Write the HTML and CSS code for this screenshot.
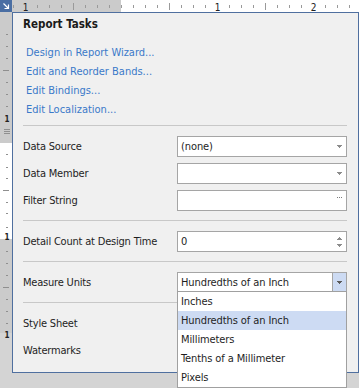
FILE: index.html
```html
<!DOCTYPE html>
<html lang="en">
<head>
  <meta charset="UTF-8">
  <meta name="viewport" content="width=device-width, initial-scale=1.0">
  <title>Report Tasks</title>
  <link rel="stylesheet" href="styles.css">
</head>
<body>
  <div class="designer">
    <div class="corner">
      <svg width="12" height="12" viewBox="0 0 12 12">
        <rect width="12" height="12" fill="#4a6ea3"/>
        <path d="M3.5 3.5L8 8M8.5 4.5v4h-4" stroke="#fff" stroke-width="1.2" fill="none"/>
      </svg>
    </div>

    <div class="ruler-top">
      <svg width="347" height="12" viewBox="0 0 347 12">
        <defs>
          <pattern id="tick-x" x="1" width="12" height="12" patternUnits="userSpaceOnUse">
            <rect y="5" width="1" height="3" fill="#9a9a9a"/>
          </pattern>
        </defs>
        <rect width="109" height="12" fill="#cbcbcb"/>
        <rect x="109" width="238" height="12" fill="#fff"/>
        <rect width="347" height="12" fill="url(#tick-x)"/>
        <rect x="61" y="3" width="1" height="7" fill="#9a9a9a"/>
        <rect x="157" y="3" width="1" height="7" fill="#9a9a9a"/>
        <rect x="253" y="3" width="1" height="7" fill="#9a9a9a"/>
        <rect x="9" y="1" width="9" height="11" fill="#cbcbcb"/>
        <rect x="201" y="1" width="9" height="11" fill="#fff"/>
        <rect x="297" y="1" width="9" height="11" fill="#fff"/>
        <g class="ruler-num">
          <text x="13.5" y="11">1</text>
          <text x="205.5" y="11">1</text>
          <text x="301.5" y="11">2</text>
        </g>
      </svg>
    </div>

    <div class="ruler-left">
      <svg width="12" height="376" viewBox="0 0 12 376">
        <rect width="12" height="321" fill="#cbcbcb"/>
        <rect y="131" width="12" height="96" fill="#fff"/>
        <g fill="#8f8f8f">
          <rect x="6" y="22" width="2" height="1"/>
          <rect x="6" y="34" width="2" height="1"/>
          <rect x="6" y="46" width="2" height="1"/>
          <rect x="3" y="58" width="6" height="1"/>
          <rect x="6" y="70" width="2" height="1"/>
          <rect x="6" y="82" width="2" height="1"/>
          <rect x="6" y="94" width="2" height="1"/>

          <rect x="4" y="117" width="6" height="1"/>
          <rect x="4" y="119" width="6" height="1"/>
          <rect x="4" y="121" width="6" height="1"/>

          <rect x="6" y="142" width="2" height="1"/>
          <rect x="6" y="155" width="2" height="1"/>
          <rect x="6" y="166" width="2" height="1"/>
          <rect x="3" y="178" width="6" height="1"/>
          <rect x="6" y="190" width="2" height="1"/>
          <rect x="6" y="201" width="2" height="1"/>
          <rect x="6" y="215" width="2" height="1"/>

          <rect x="6" y="239" width="2" height="1"/>
          <rect x="6" y="251" width="2" height="1"/>
          <rect x="6" y="263" width="2" height="1"/>
          <rect x="3" y="275" width="6" height="1"/>
          <rect x="6" y="287" width="2" height="1"/>
          <rect x="6" y="299" width="2" height="1"/>
          <rect x="6" y="311" width="2" height="1"/>
        </g>
        <g class="ruler-num small">
          <text x="7" y="109.5">1</text>
          <text x="7" y="227.5">1</text>
          <text x="7" y="326">1</text>
        </g>
      </svg>
    </div>

    <div class="canvas">
      <div class="tasks">
        <h2 class="tasks-title">Report Tasks</h2>

        <div class="links">
          <a href="#">Design in Report Wizard...</a>
          <a href="#">Edit and Reorder Bands...</a>
          <a href="#">Edit Bindings...</a>
          <a href="#">Edit Localization...</a>
        </div>

        <div class="section">
          <div class="row">
            <label>Data Source</label>
            <div class="field">
              <span class="value">(none)</span>
              <span class="btn"><svg width="5" height="3"><path d="M0 0h5v1h-1v1h-1v1h-1v-1h-1v-1h-1z" fill="#8c8c8c"/></svg></span>
            </div>
          </div>
          <div class="row">
            <label>Data Member</label>
            <div class="field">
              <span class="value"></span>
              <span class="btn"><svg width="5" height="3"><path d="M0 0h5v1h-1v1h-1v1h-1v-1h-1v-1h-1z" fill="#8c8c8c"/></svg></span>
            </div>
          </div>
          <div class="row">
            <label>Filter String</label>
            <div class="field">
              <span class="value"></span>
              <span class="btn dots"><svg width="5" height="1"><path d="M0 0h1v1h-1zM2 0h1v1h-1zM4 0h1v1h-1z" fill="#7a7a7a"/></svg></span>
            </div>
          </div>
        </div>

        <div class="section">
          <div class="row">
            <label>Detail Count at Design Time</label>
            <div class="field">
              <span class="value">0</span>
              <span class="btn spin">
                <svg width="5" height="3"><path d="M2 0h1v1h1v1h1v1h-5v-1h1v-1h1z" fill="#8c8c8c"/></svg>
                <svg width="5" height="3"><path d="M0 0h5v1h-1v1h-1v1h-1v-1h-1v-1h-1z" fill="#8c8c8c"/></svg>
              </span>
            </div>
          </div>
        </div>

        <div class="section">
          <div class="row">
            <label>Measure Units</label>
            <div class="field open">
              <span class="value">Hundredths of an Inch</span>
              <span class="btn"><svg width="5" height="3"><path d="M0 0h5v1h-1v1h-1v1h-1v-1h-1v-1h-1z" fill="#5a5a5a"/></svg></span>
              <ul class="popup">
                <li>Inches</li>
                <li class="selected">Hundredths of an Inch</li>
                <li>Millimeters</li>
                <li>Tenths of a Millimeter</li>
                <li>Pixels</li>
              </ul>
            </div>
          </div>
        </div>

        <div class="section">
          <div class="row">
            <label>Style Sheet</label>
            <div class="field"><span class="value"></span></div>
          </div>
          <div class="row">
            <label>Watermarks</label>
            <div class="field"><span class="value"></span></div>
          </div>
        </div>
      </div>
    </div>
  </div>
</body>
</html>
```

FILE: styles.css
```css
* {
  box-sizing: border-box;
}
html, body {
  margin: 0;
  overflow: hidden;
}
body {
  font-family: "DejaVu Sans Condensed", "DejaVu Sans", sans-serif;
  font-size: 11px;
  color: #1e1e1e;
  background: #d4d4d4;
}
svg {
  display: block;
}
.designer {
  display: grid;
  grid-template-columns: 12px 347px;
  grid-template-rows: 12px 376px;
  width: 359px;
  height: 388px;
}
.ruler-num text {
  font-family: "DejaVu Sans Condensed", "DejaVu Sans", sans-serif;
  font-size: 10px;
  fill: #222;
  text-anchor: middle;
}
.ruler-num.small text {
  font-size: 8px;
  font-weight: bold;
}
.tasks {
  width: 347px;
  height: 361px;
  background: #f0f0f0;
  border: 1px solid #4f6f9f;
  padding: 0 11px 0 10px;
  display: flex;
  flex-direction: column;
}
.tasks-title {
  margin: 0;
  font-size: 11.5px;
  font-weight: bold;
  line-height: 22px;
  color: #1a1a1a;
}
.links {
  display: flex;
  flex-direction: column;
  align-items: flex-start;
  margin: 8px 0 6px;
}
.links a {
  line-height: 19px;
  padding-left: 3px;
  color: #3a79c9;
  text-decoration: none;
}
.section {
  border-top: 1px solid #c8c8c8;
  padding: 10px 0 9px;
  display: flex;
  flex-direction: column;
  gap: 6px;
}
.row {
  display: grid;
  grid-template-columns: 154px 170px;
  height: 21px;
  align-items: center;
}
.row label {
  letter-spacing: -0.2px;
}
.field {
  position: relative;
  height: 21px;
  border: 1px solid #a5a5a5;
  background: #fff;
  display: flex;
}
.field .value {
  flex: 1;
  padding-left: 3px;
  line-height: 19px;
  letter-spacing: -0.1px;
}
.field .btn {
  width: 14px;
  display: flex;
  flex-direction: column;
  align-items: center;
  justify-content: center;
}
.field .dots {
  padding-bottom: 6px;
}
.field .spin {
  gap: 4px;
}
.field.open .btn {
  background: #cddbf3;
  border-left: 1px solid #a5a5a5;
}
.popup {
  position: absolute;
  z-index: 10;
  top: 18px;
  left: -1px;
  right: -1px;
  margin: 0;
  padding: 0;
  list-style: none;
  background: #fff;
  border: 1px solid #a0a0a0;
}
.popup li {
  height: 19px;
  line-height: 19px;
  padding-left: 3px;
  letter-spacing: -0.1px;
}
.popup .selected {
  background: #cddbf3;
}
```
